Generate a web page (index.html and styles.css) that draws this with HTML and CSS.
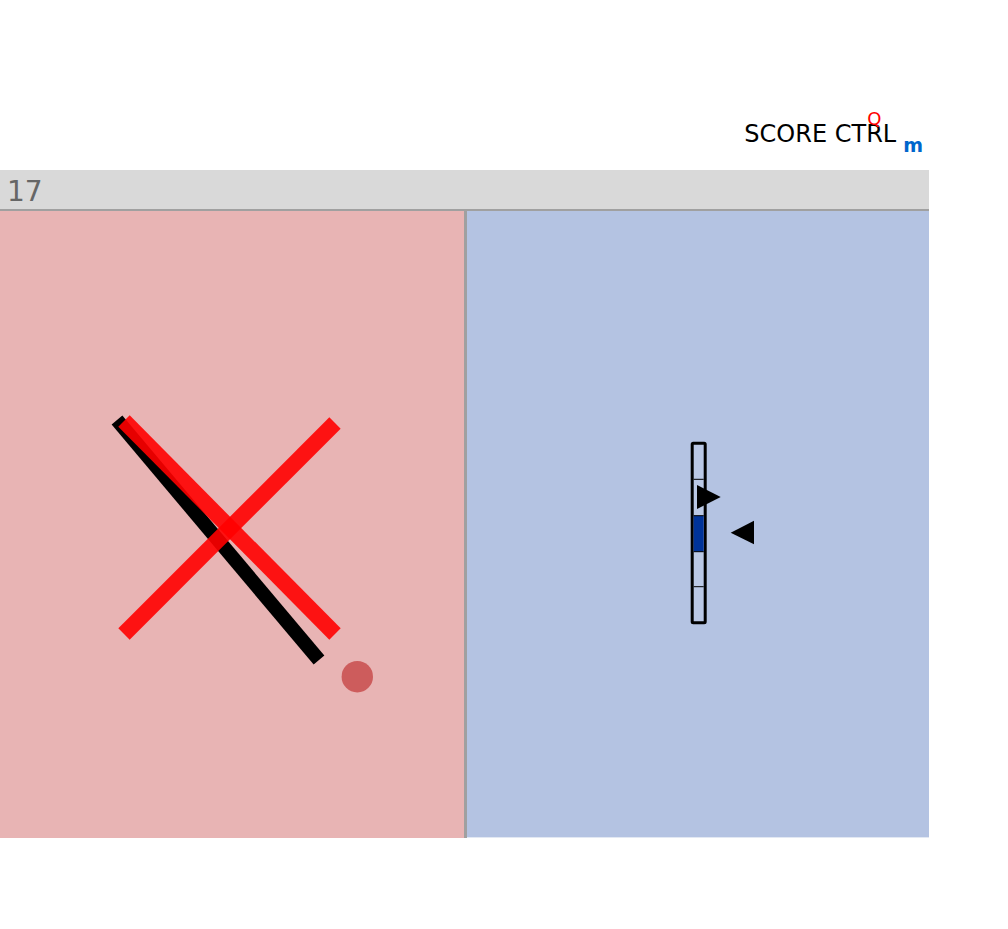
FILE: index.html
```html
<!DOCTYPE html>
<html>
<head>
<meta charset="utf-8">
<link rel="stylesheet" href="styles.css">
</head>
<body>
<div class="page">
  <header class="header">
    <span class="title">SCORE CTRL<span class="title-q">Q</span></span>
    <span class="title-m">m</span>
  </header>
  <div class="bar"><span class="bar-num">17</span></div>
  <div class="panels">
    <div class="panel panel-left">
      <svg class="canvas" width="464" height="627" viewBox="0 0 464 627">
        <line x1="117" y1="209" x2="319" y2="449" stroke="#000" stroke-width="14"/>
        <g stroke="#ff0000" stroke-opacity="0.9" stroke-width="16">
          <line x1="124" y1="210" x2="335" y2="423"/>
          <line x1="335" y1="212" x2="124" y2="423"/>
        </g>
        <circle cx="357.3" cy="465.7" r="15.7" fill="#cd5c5c"/>
      </svg>
    </div>
    <div class="divider"></div>
    <div class="panel panel-right">
      <svg class="canvas" width="462" height="626" viewBox="0 0 462 626">
        <rect x="225.2" y="232.2" width="13" height="179.6" fill="#bac8e5" stroke="#000" stroke-width="3" rx="1"/>
        <rect x="226.7" y="304.7" width="10" height="36" fill="#003399"/>
        <g stroke="#000" stroke-width="1">
          <line x1="226.7" y1="268.3" x2="236.7" y2="268.3"/>
          <line x1="226.7" y1="304.7" x2="236.7" y2="304.7"/>
          <line x1="226.7" y1="340.7" x2="236.7" y2="340.7"/>
          <line x1="226.7" y1="375.7" x2="236.7" y2="375.7"/>
        </g>
        <polygon points="230,274 230,298 253.7,286" fill="#000"/>
        <polygon points="263.7,321.7 287,309.7 287,333.3" fill="#000"/>
      </svg>
    </div>
  </div>
</div>
</body>
</html>
```

FILE: styles.css
```css
html, body {
  margin: 0;
  padding: 0;
  background: #ffffff;
}

.page {
  width: 929px;
  font-family: "DejaVu Sans", Verdana, sans-serif;
}

.header {
  height: 170px;
  display: flex;
  justify-content: flex-end;
  align-items: flex-start;
  padding-right: 6px;
  box-sizing: border-box;
}

.title {
  position: relative;
  margin-top: 120px;
  font-size: 24px;
  line-height: 28px;
  color: #000;
}

.title-q {
  position: absolute;
  left: 123px;
  top: -10px;
  font-size: 18px;
  line-height: 1;
  color: #ff0000;
}

.title-m {
  margin-top: 135px;
  margin-left: 7px;
  font-size: 19px;
  line-height: 20px;
  font-weight: bold;
  color: #0066cc;
}

.bar {
  height: 39px;
  background: #d9d9d9;
  border-bottom: 2px solid #a0a0a0;
  box-sizing: content-box;
  padding-left: 7px;
  display: flex;
  align-items: flex-start;
}

.bar-num {
  padding-top: 5px;
  font-size: 28px;
  line-height: 34px;
  color: #666666;
}

.panels {
  display: flex;
  align-items: flex-start;
}

.panel {
  position: relative;
}

.panel-left {
  width: 464px;
  height: 627px;
  background: #e8b4b4;
}

.divider {
  width: 3px;
  height: 627px;
  background: #a0a0a0;
}

.panel-right {
  width: 462px;
  height: 626px;
  background: #b4c3e2;
  border-bottom: 1px solid #e2e8f3;
}

.canvas {
  display: block;
}
```
